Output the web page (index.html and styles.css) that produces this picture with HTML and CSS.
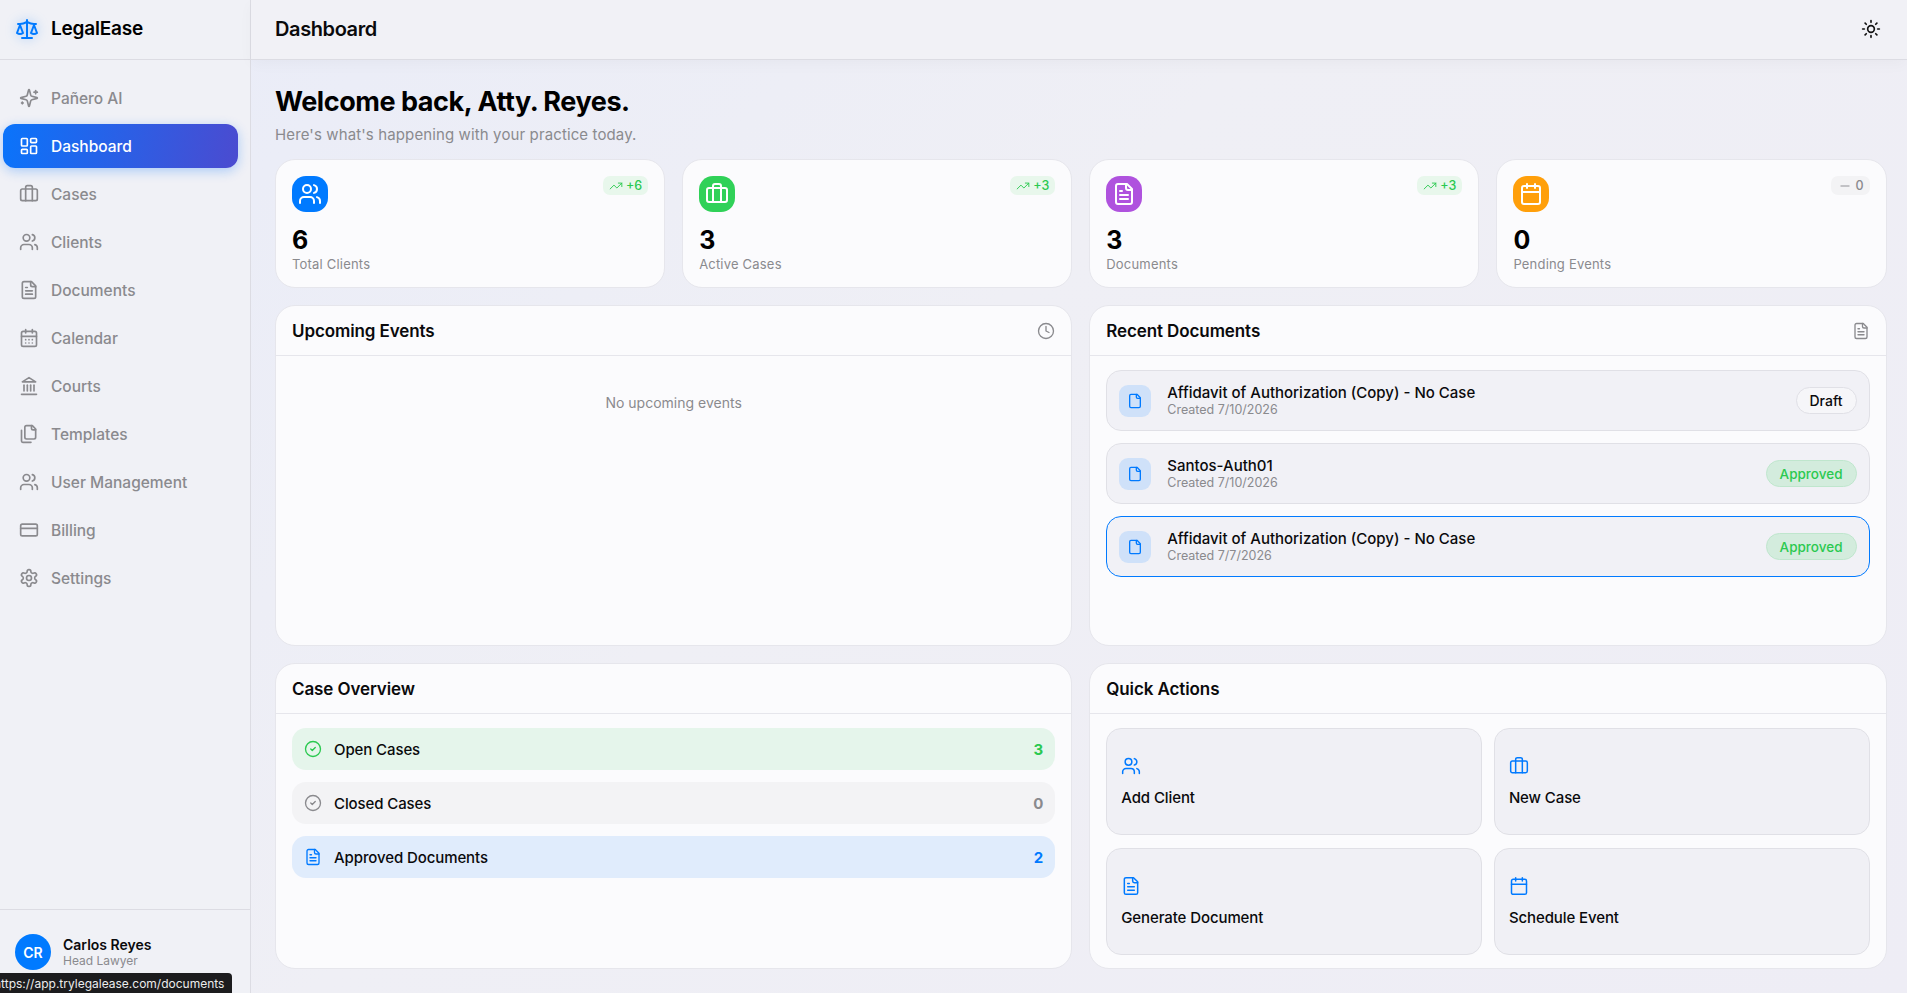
FILE: index.html
```html
<!DOCTYPE html>
<html lang="en">

<head>
  <meta charset="UTF-8">
  <meta name="viewport" content="width=device-width, initial-scale=1.0">
  <title>LegalEase - Dashboard</title>
  <link rel="stylesheet" href="styles.css">
</head>

<body>

  <!-- Icon sprite -->
  <svg class="sprite" xmlns="http://www.w3.org/2000/svg">
    <symbol id="i-scale" viewBox="0 0 24 24"><path d="m16 16 3-8 3 8c-.87.65-1.92 1-3 1s-2.13-.35-3-1Z"/><path d="m2 16 3-8 3 8c-.87.65-1.92 1-3 1s-2.13-.35-3-1Z"/><path d="M7 21h10"/><path d="M12 3v18"/><path d="M3 7h2c2 0 5-1 7-2 2 1 5 2 7 2h2"/></symbol>
    <symbol id="i-sparkles" viewBox="0 0 24 24"><path d="M9.937 15.5A2 2 0 0 0 8.5 14.063l-6.135-1.582a.5.5 0 0 1 0-.962L8.5 9.936A2 2 0 0 0 9.937 8.5l1.582-6.135a.5.5 0 0 1 .963 0L14.063 8.5A2 2 0 0 0 15.5 9.937l6.135 1.581a.5.5 0 0 1 0 .964L15.5 14.063a2 2 0 0 0-1.437 1.437l-1.582 6.135a.5.5 0 0 1-.963 0z"/><path d="M20 3v4"/><path d="M22 5h-4"/><path d="M4 17v2"/><path d="M5 18H3"/></symbol>
    <symbol id="i-dashboard" viewBox="0 0 24 24"><rect width="7" height="9" x="3" y="3" rx="1"/><rect width="7" height="5" x="14" y="3" rx="1"/><rect width="7" height="9" x="14" y="12" rx="1"/><rect width="7" height="5" x="3" y="16" rx="1"/></symbol>
    <symbol id="i-briefcase" viewBox="0 0 24 24"><path d="M16 20V4a2 2 0 0 0-2-2h-4a2 2 0 0 0-2 2v16"/><rect width="20" height="14" x="2" y="6" rx="2"/></symbol>
    <symbol id="i-users" viewBox="0 0 24 24"><path d="M16 21v-2a4 4 0 0 0-4-4H6a4 4 0 0 0-4 4v2"/><circle cx="9" cy="7" r="4"/><path d="M22 21v-2a4 4 0 0 0-3-3.87"/><path d="M16 3.13a4 4 0 0 1 0 7.75"/></symbol>
    <symbol id="i-file-text" viewBox="0 0 24 24"><path d="M15 2H6a2 2 0 0 0-2 2v16a2 2 0 0 0 2 2h12a2 2 0 0 0 2-2V7Z"/><path d="M14 2v4a2 2 0 0 0 2 2h4"/><path d="M10 9H8"/><path d="M16 13H8"/><path d="M16 17H8"/></symbol>
    <symbol id="i-file" viewBox="0 0 24 24"><path d="M15 2H6a2 2 0 0 0-2 2v16a2 2 0 0 0 2 2h12a2 2 0 0 0 2-2V7Z"/><path d="M14 2v4a2 2 0 0 0 2 2h4"/></symbol>
    <symbol id="i-calendar" viewBox="0 0 24 24"><path d="M8 2v4"/><path d="M16 2v4"/><rect width="18" height="18" x="3" y="4" rx="2"/><path d="M3 10h18"/></symbol>
    <symbol id="i-calendar-days" viewBox="0 0 24 24"><path d="M8 2v4"/><path d="M16 2v4"/><rect width="18" height="18" x="3" y="4" rx="2"/><path d="M3 10h18"/><path d="M8 14h.01"/><path d="M12 14h.01"/><path d="M16 14h.01"/><path d="M8 18h.01"/><path d="M12 18h.01"/><path d="M16 18h.01"/></symbol>
    <symbol id="i-landmark" viewBox="0 0 24 24"><path d="M3 22h18"/><path d="M6 18v-7"/><path d="M10 18v-7"/><path d="M14 18v-7"/><path d="M18 18v-7"/><path d="M12 2l8 5H4z"/></symbol>
    <symbol id="i-files" viewBox="0 0 24 24"><path d="M20 7h-3a2 2 0 0 1-2-2V2"/><path d="M9 18a2 2 0 0 1-2-2V4a2 2 0 0 1 2-2h7l4 4v10a2 2 0 0 1-2 2Z"/><path d="M3 7.6v12.8A1.6 1.6 0 0 0 4.6 22h9.8"/></symbol>
    <symbol id="i-card" viewBox="0 0 24 24"><rect width="20" height="14" x="2" y="5" rx="2"/><path d="M2 10h20"/></symbol>
    <symbol id="i-settings" viewBox="0 0 24 24"><path d="M12.22 2h-.44a2 2 0 0 0-2 2v.18a2 2 0 0 1-1 1.73l-.43.25a2 2 0 0 1-2 0l-.15-.08a2 2 0 0 0-2.73.73l-.22.38a2 2 0 0 0 .73 2.73l.15.1a2 2 0 0 1 1 1.72v.51a2 2 0 0 1-1 1.74l-.15.09a2 2 0 0 0-.73 2.73l.22.38a2 2 0 0 0 2.73.73l.15-.08a2 2 0 0 1 2 0l.43.25a2 2 0 0 1 1 1.73V20a2 2 0 0 0 2 2h.44a2 2 0 0 0 2-2v-.18a2 2 0 0 1 1-1.73l.43-.25a2 2 0 0 1 2 0l.15.08a2 2 0 0 0 2.73-.73l.22-.39a2 2 0 0 0-.73-2.73l-.15-.08a2 2 0 0 1-1-1.74v-.5a2 2 0 0 1 1-1.74l.15-.09a2 2 0 0 0 .73-2.73l-.22-.38a2 2 0 0 0-2.73-.73l-.15.08a2 2 0 0 1-2 0l-.43-.25a2 2 0 0 1-1-1.73V4a2 2 0 0 0-2-2z"/><circle cx="12" cy="12" r="3"/></symbol>
    <symbol id="i-sun" viewBox="0 0 24 24"><circle cx="12" cy="12" r="4"/><path d="M12 2v2"/><path d="M12 20v2"/><path d="m4.93 4.93 1.41 1.41"/><path d="m17.66 17.66 1.41 1.41"/><path d="M2 12h2"/><path d="M20 12h2"/><path d="m6.34 17.66-1.41 1.41"/><path d="m19.07 4.93-1.41 1.41"/></symbol>
    <symbol id="i-trend" viewBox="0 0 24 24"><path d="M22 7l-8.5 8.5-5-5L2 17"/><path d="M16 7h6v6"/></symbol>
    <symbol id="i-minus" viewBox="0 0 24 24"><path d="M5 12h14"/></symbol>
    <symbol id="i-clock" viewBox="0 0 24 24"><circle cx="12" cy="12" r="10"/><path d="M12 6v6l4 2"/></symbol>
    <symbol id="i-check" viewBox="0 0 24 24"><circle cx="12" cy="12" r="10"/><path d="m9 12 2 2 4-4"/></symbol>
  </svg>

  <div class="app">

    <!-- Sidebar -->
    <aside class="sidebar">
      <div class="brand">
        <svg class="icon brand-icon"><use href="#i-scale"/></svg>
        <span class="brand-name">LegalEase</span>
      </div>
      <nav class="nav">
        <a class="nav-item" href="#"><svg class="icon"><use href="#i-sparkles"/></svg>Pañero AI</a>
        <a class="nav-item active" href="#"><svg class="icon"><use href="#i-dashboard"/></svg>Dashboard</a>
        <a class="nav-item" href="#"><svg class="icon"><use href="#i-briefcase"/></svg>Cases</a>
        <a class="nav-item" href="#"><svg class="icon"><use href="#i-users"/></svg>Clients</a>
        <a class="nav-item" href="#"><svg class="icon"><use href="#i-file-text"/></svg>Documents</a>
        <a class="nav-item" href="#"><svg class="icon"><use href="#i-calendar-days"/></svg>Calendar</a>
        <a class="nav-item" href="#"><svg class="icon"><use href="#i-landmark"/></svg>Courts</a>
        <a class="nav-item" href="#"><svg class="icon"><use href="#i-files"/></svg>Templates</a>
        <a class="nav-item" href="#"><svg class="icon"><use href="#i-users"/></svg>User Management</a>
        <a class="nav-item" href="#"><svg class="icon"><use href="#i-card"/></svg>Billing</a>
        <a class="nav-item" href="#"><svg class="icon"><use href="#i-settings"/></svg>Settings</a>
      </nav>
      <div class="user">
        <div class="avatar">CR</div>
        <div>
          <div class="user-name">Carlos Reyes</div>
          <div class="user-role">Head Lawyer</div>
        </div>
      </div>
    </aside>

    <!-- Main -->
    <div class="main">
      <header class="topbar">
        <span class="topbar-title">Dashboard</span>
        <svg class="icon sun"><use href="#i-sun"/></svg>
      </header>

      <main class="content">
        <h1>Welcome back, Atty. Reyes.</h1>
        <p class="subtitle">Here's what's happening with your practice today.</p>

        <!-- Stat cards -->
        <section class="stats">
          <div class="stat">
            <div class="stat-top">
              <span class="stat-icon blue"><svg class="icon"><use href="#i-users"/></svg></span>
              <span class="trend"><svg class="icon"><use href="#i-trend"/></svg>+6</span>
            </div>
            <div class="stat-num">6</div>
            <div class="stat-label">Total Clients</div>
          </div>
          <div class="stat">
            <div class="stat-top">
              <span class="stat-icon green"><svg class="icon"><use href="#i-briefcase"/></svg></span>
              <span class="trend"><svg class="icon"><use href="#i-trend"/></svg>+3</span>
            </div>
            <div class="stat-num">3</div>
            <div class="stat-label">Active Cases</div>
          </div>
          <div class="stat">
            <div class="stat-top">
              <span class="stat-icon purple"><svg class="icon"><use href="#i-file-text"/></svg></span>
              <span class="trend"><svg class="icon"><use href="#i-trend"/></svg>+3</span>
            </div>
            <div class="stat-num">3</div>
            <div class="stat-label">Documents</div>
          </div>
          <div class="stat">
            <div class="stat-top">
              <span class="stat-icon orange"><svg class="icon"><use href="#i-calendar"/></svg></span>
              <span class="trend flat"><svg class="icon"><use href="#i-minus"/></svg>0</span>
            </div>
            <div class="stat-num">0</div>
            <div class="stat-label">Pending Events</div>
          </div>
        </section>

        <!-- Panels -->
        <section class="panels">
          <div class="panel">
            <div class="panel-head">
              <h2>Upcoming Events</h2>
              <svg class="icon head-icon"><use href="#i-clock"/></svg>
            </div>
            <p class="empty">No upcoming events</p>
          </div>

          <div class="panel">
            <div class="panel-head">
              <h2>Recent Documents</h2>
              <svg class="icon head-icon"><use href="#i-file-text"/></svg>
            </div>
            <div class="panel-body doc-list">
              <div class="doc">
                <span class="doc-icon"><svg class="icon"><use href="#i-file"/></svg></span>
                <div class="doc-text">
                  <div class="doc-title">Affidavit of Authorization (Copy) - No Case</div>
                  <div class="doc-date">Created 7/10/2026</div>
                </div>
                <span class="badge">Draft</span>
              </div>
              <div class="doc">
                <span class="doc-icon"><svg class="icon"><use href="#i-file"/></svg></span>
                <div class="doc-text">
                  <div class="doc-title">Santos-Auth01</div>
                  <div class="doc-date">Created 7/10/2026</div>
                </div>
                <span class="badge approved">Approved</span>
              </div>
              <div class="doc focused">
                <span class="doc-icon"><svg class="icon"><use href="#i-file"/></svg></span>
                <div class="doc-text">
                  <div class="doc-title">Affidavit of Authorization (Copy) - No Case</div>
                  <div class="doc-date">Created 7/7/2026</div>
                </div>
                <span class="badge approved">Approved</span>
              </div>
            </div>
          </div>

          <div class="panel">
            <div class="panel-head">
              <h2>Case Overview</h2>
            </div>
            <div class="panel-body overview">
              <div class="over-row over-green">
                <svg class="icon"><use href="#i-check"/></svg>
                <span class="over-label">Open Cases</span>
                <span class="over-count">3</span>
              </div>
              <div class="over-row over-grey">
                <svg class="icon"><use href="#i-check"/></svg>
                <span class="over-label">Closed Cases</span>
                <span class="over-count">0</span>
              </div>
              <div class="over-row over-blue">
                <svg class="icon"><use href="#i-file-text"/></svg>
                <span class="over-label">Approved Documents</span>
                <span class="over-count">2</span>
              </div>
            </div>
          </div>

          <div class="panel">
            <div class="panel-head">
              <h2>Quick Actions</h2>
            </div>
            <div class="panel-body actions">
              <a class="action" href="#"><svg class="icon"><use href="#i-users"/></svg>Add Client</a>
              <a class="action" href="#"><svg class="icon"><use href="#i-briefcase"/></svg>New Case</a>
              <a class="action" href="#"><svg class="icon"><use href="#i-file-text"/></svg>Generate Document</a>
              <a class="action" href="#"><svg class="icon"><use href="#i-calendar"/></svg>Schedule Event</a>
            </div>
          </div>
        </section>
      </main>
    </div>
  </div>

  <!-- Browser link preview -->
  <div class="status-tip">https://app.trylegalease.com/documents</div>

</body>

</html>
```

FILE: styles.css
```css
/* General Reset */
* {
  margin: 0;
  padding: 0;
  box-sizing: border-box;
}

html,
body {
  height: 100%;
  overflow: hidden;
}

body {
  font-family: Inter, "Noto Sans", sans-serif;
  color: #0a0a0c;
  background: linear-gradient(135deg, #e9ecf8 0%, #efeff5 45%, #eeedf5 100%);
}

a {
  color: inherit;
  text-decoration: none;
}

.sprite {
  display: none;
}

.icon {
  width: 20px;
  height: 20px;
  flex-shrink: 0;
  fill: none;
  stroke: currentColor;
  stroke-width: 2;
  stroke-linecap: round;
  stroke-linejoin: round;
}

.app {
  display: flex;
  height: 100%;
}

/* Sidebar */
.sidebar {
  width: 251px;
  flex-shrink: 0;
  display: flex;
  flex-direction: column;
  background-color: #f0f1f6;
  border-right: 1px solid #dcdce3;
}

.brand {
  height: 60px;
  display: flex;
  align-items: center;
  gap: 12px;
  padding: 0 0 2px 15px;
  border-bottom: 1px solid #dcdce3;
}

.brand-icon {
  width: 24px;
  height: 24px;
  color: #007aff;
  filter: drop-shadow(0 0 6px rgba(0, 122, 255, 0.35));
}

.brand-name {
  font-size: 19px;
  font-weight: 600;
  letter-spacing: -0.2px;
  color: #000;
}

.nav {
  flex: 1;
  display: flex;
  flex-direction: column;
  gap: 4px;
  padding: 16px 0 0 3px;
}

.nav-item {
  width: 235px;
  height: 44px;
  display: flex;
  align-items: center;
  gap: 12px;
  padding-left: 16px;
  border-radius: 12px;
  font-size: 15.5px;
  font-weight: 500;
  color: #8a8a8e;
}

.nav-item.active {
  color: #fff;
  background: linear-gradient(100deg, #0a74fb 0%, #4b4bd0 100%);
  box-shadow: 0 3px 12px rgba(10, 116, 251, 0.3);
}

.user {
  height: 84px;
  display: flex;
  gap: 12px;
  padding: 24px 0 0 15px;
  border-top: 1px solid #dcdce3;
}

.avatar {
  width: 36px;
  height: 36px;
  border-radius: 50%;
  display: flex;
  align-items: center;
  justify-content: center;
  background-color: #007aff;
  color: #fff;
  font-size: 14px;
  font-weight: 600;
}

.user-name {
  font-size: 14px;
  font-weight: 600;
  line-height: 16px;
  margin-top: 3px;
}

.user-role {
  font-size: 12px;
  line-height: 15px;
  color: #8a8a8e;
}

/* Browser status tooltip sits over the sidebar */
.status-tip {
  position: absolute;
  left: 0;
  bottom: 0;
  width: 232px;
  height: 20px;
  border-radius: 0 4px 0 0;
  background-color: #1c1c1e;
  color: #ececec;
  font-size: 12px;
  line-height: 21px;
  white-space: nowrap;
  overflow: hidden;
  text-indent: -6px;
}

/* Top bar */
.main {
  flex: 1;
  min-width: 0;
  display: flex;
  flex-direction: column;
}

.topbar {
  height: 60px;
  flex-shrink: 0;
  display: flex;
  align-items: center;
  justify-content: space-between;
  padding: 0 26px 2px 24px;
  background-color: #f1f1f6;
  border-bottom: 1px solid #dcdce3;
  box-shadow: 0 4px 14px rgba(0, 0, 0, 0.03);
}

.topbar-title {
  font-size: 20px;
  font-weight: 600;
  letter-spacing: -0.4px;
}

.sun {
  color: #111;
}

/* Content */
.content {
  padding: 25px 20.5px 0 24px;
}

h1 {
  font-size: 27px;
  font-weight: 700;
  line-height: 34px;
  letter-spacing: -0.45px;
  color: #000;
}

.subtitle {
  margin-top: 5px;
  margin-bottom: 13px;
  font-size: 15px;
  line-height: 22px;
  letter-spacing: 0.12px;
  color: #8a8a8e;
}

/* Stat cards */
.stats {
  display: grid;
  grid-template-columns: repeat(4, 1fr);
  gap: 17px;
}

.stat {
  height: 129px;
  padding: 16px 16px 0;
  background-color: #fbfbfd;
  border: 1px solid #e6e6ec;
  border-radius: 20px;
}

.stat-top {
  display: flex;
  align-items: flex-start;
  justify-content: space-between;
}

.stat-icon {
  width: 36px;
  height: 36px;
  display: flex;
  align-items: center;
  justify-content: center;
  border-radius: 14px;
  color: #fff;
}

.stat-icon .icon {
  width: 24px;
  height: 24px;
}

.blue {
  background-color: #007aff;
}

.green {
  background-color: #30d158;
}

.purple {
  background-color: #af52de;
}

.orange {
  background-color: #ff9f0a;
}

.trend {
  height: 19px;
  display: flex;
  align-items: center;
  gap: 3px;
  padding: 0 6px;
  border-radius: 7px;
  background-color: #e8f7ec;
  color: #2bc950;
  font-size: 12.5px;
  font-weight: 500;
}

.trend .icon {
  width: 14px;
  height: 14px;
  stroke-width: 1.6;
}

.trend.flat {
  padding: 0 6px 0 7px;
  background-color: #f3f3f5;
  color: #8a8a8e;
}

.stat-num {
  margin-top: 14px;
  font-size: 25px;
  font-weight: 700;
  line-height: 28px;
  color: #000;
}

.stat-label {
  margin-top: 2px;
  font-size: 13px;
  line-height: 16px;
  letter-spacing: 0.2px;
  color: #8a8a8e;
}

/* Panels */
.panels {
  display: grid;
  grid-template-columns: 1fr 1fr;
  grid-template-rows: 341px 306px;
  gap: 17px;
  margin-top: 17px;
}

.panel {
  background-color: #fbfbfd;
  border: 1px solid #e6e6ec;
  border-radius: 20px;
  overflow: hidden;
}

.panel-head {
  height: 50px;
  display: flex;
  align-items: center;
  justify-content: space-between;
  padding: 0 16px;
  border-bottom: 1px solid #e6e6ec;
}

.panel-head h2 {
  font-size: 17px;
  font-weight: 600;
  letter-spacing: -0.1px;
}

.head-icon {
  width: 18px;
  height: 18px;
  stroke-width: 1.8;
  color: #8a8a8e;
}

.panel-body {
  padding: 14px 16px;
}

.empty {
  margin-top: 38px;
  text-align: center;
  font-size: 14px;
  line-height: 18px;
  color: #8a8a8e;
}

/* Recent documents */
.doc-list {
  display: flex;
  flex-direction: column;
  gap: 12px;
}

.doc {
  height: 61px;
  display: flex;
  align-items: center;
  gap: 16px;
  padding: 0 12px;
  background-color: #f1f1f6;
  border: 1px solid #e0e0e6;
  border-radius: 15px;
}

.doc.focused {
  border-color: #007aff;
}

.doc-icon {
  width: 32px;
  height: 32px;
  display: flex;
  align-items: center;
  justify-content: center;
  border-radius: 9px;
  background-color: #cfe1f9;
  color: #007aff;
}

.doc-icon .icon {
  width: 16px;
  height: 16px;
}

.doc-text {
  flex: 1;
  min-width: 0;
}

.doc-title {
  font-size: 15px;
  font-weight: 500;
  line-height: 19px;
}

.doc-date {
  font-size: 12.5px;
  line-height: 16px;
  color: #8a8a8e;
}

.badge {
  height: 27px;
  display: flex;
  align-items: center;
  padding: 0 13px;
  border: 1px solid #e0e0e6;
  border-radius: 14px;
  background-color: #f6f6f9;
  font-size: 14px;
  font-weight: 500;
}

.badge.approved {
  font-size: 13.5px;
  background-color: #d3ecdd;
  border-color: #bfe6cd;
  color: #2bc950;
}

/* Case overview */
.overview {
  display: flex;
  flex-direction: column;
  gap: 12px;
}

.over-row {
  height: 42px;
  display: flex;
  align-items: center;
  gap: 12px;
  padding: 0 12px;
  border-radius: 14px;
}

.over-row .icon {
  width: 18px;
  height: 18px;
  stroke-width: 1.8;
}

.over-label {
  flex: 1;
  font-size: 15px;
  font-weight: 500;
  letter-spacing: -0.1px;
}

.over-count {
  font-size: 15px;
  font-weight: 700;
}

.over-green {
  background-color: #e5f5eb;
}

.over-green .icon,
.over-green .over-count {
  color: #2bc950;
}

.over-grey {
  background-color: #f3f3f5;
}

.over-grey .icon,
.over-grey .over-count {
  color: #8a8a8e;
}

.over-blue {
  background-color: #e0ecfc;
}

.over-blue .icon,
.over-blue .over-count {
  color: #007aff;
}

/* Quick actions */
.actions {
  display: grid;
  grid-template-columns: 1fr 1fr;
  grid-auto-rows: 107px;
  gap: 13px 12px;
}

.action {
  display: flex;
  flex-direction: column;
  justify-content: center;
  gap: 13px;
  padding: 0 14px;
  background-color: #f0f0f5;
  border: 1px solid #e0e0e6;
  border-radius: 15px;
  font-size: 15px;
  line-height: 18px;
  font-weight: 500;
  letter-spacing: -0.1px;
}

.action .icon {
  stroke-width: 1.8;
  color: #007aff;
}
```
